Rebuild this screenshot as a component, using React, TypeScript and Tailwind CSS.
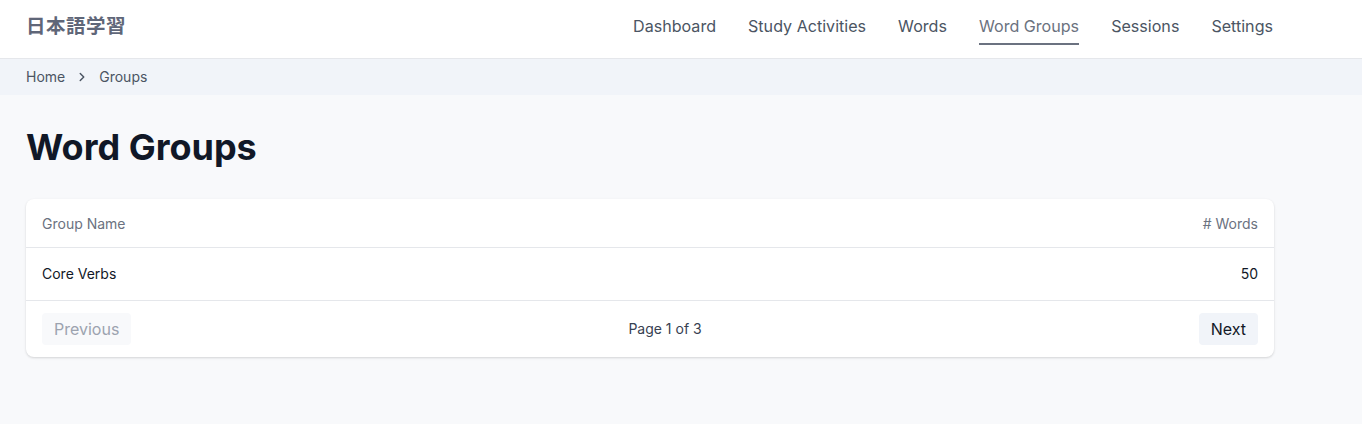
import React from 'react';

const navItems = ['Dashboard', 'Study Activities', 'Words', 'Word Groups', 'Sessions', 'Settings'];

const groups = [{ name: 'Core Verbs', count: 50 }];

export default function App() {
  return (
    <div
      className="min-h-[424px] bg-[#f8f9fb]"
      style={{ fontFamily: 'Inter, "Noto Sans CJK JP", sans-serif' }}
    >
      <header className="flex h-[59px] items-start justify-between border-b border-[#e5e7eb] bg-white px-[26px]">
        <div className="mt-[12px] text-[19.5px] font-bold leading-[28px] tracking-[0.5px] text-[#5f6678]">日本語学習</div>
        <nav className="mr-[63px] flex items-start gap-8">
          {navItems.map((item) => {
            const active = item === 'Word Groups';
            return (
              <a
                key={item}
                className={`mt-[14px] border-b-2 pb-[5px] text-[16.1px] leading-6 ${
                  active ? 'border-[#6b7280] text-[#6b7280]' : 'border-transparent text-[#4b5563]'
                }`}
              >
                {item}
              </a>
            );
          })}
        </nav>
      </header>

      <div className="flex h-[36px] items-center gap-[10px] bg-[#f1f4f9] px-[26px] text-sm text-[#4b5563]">
        <span>Home</span>
        <svg width="14" height="14" viewBox="0 0 24 24" fill="none" stroke="currentColor" strokeWidth="2.5" strokeLinecap="round" strokeLinejoin="round">
          <path d="m9 18 6-6-6-6" />
        </svg>
        <span>Groups</span>
      </div>

      <main className="px-[26px] pt-[30px]">
        <div className="max-w-[1248px]">
          <h1 className="text-[36px] font-bold leading-[44px] text-[#111827]">Word Groups</h1>

          <div className="mt-[30px] overflow-hidden rounded-lg bg-white shadow-[0_1px_3px_rgba(0,0,0,0.1),0_1px_2px_rgba(0,0,0,0.06)]">
            <div className="flex h-[49px] items-center justify-between border-b border-[#e5e7eb] px-4 pt-[1px] text-sm text-[#6b7280]">
              <span>Group Name</span>
              <span># Words</span>
            </div>
            {groups.map((g) => (
              <div
                key={g.name}
                className="flex h-[53px] items-center justify-between border-b border-[#e5e7eb] px-4 text-sm text-[#111827]"
              >
                <span>{g.name}</span>
                <span>{g.count}</span>
              </div>
            ))}
            <div className="flex h-[56px] items-center justify-between px-4">
              <button className="h-8 rounded bg-[#f8f9fb] px-3 text-base text-[#9ca3af]">Previous</button>
              <span className="text-sm text-[#374151]">Page 1 of 3</span>
              <button className="h-8 rounded bg-[#f1f4f9] px-3 text-base text-[#111827]">Next</button>
            </div>
          </div>
        </div>
      </main>
    </div>
  );
}
